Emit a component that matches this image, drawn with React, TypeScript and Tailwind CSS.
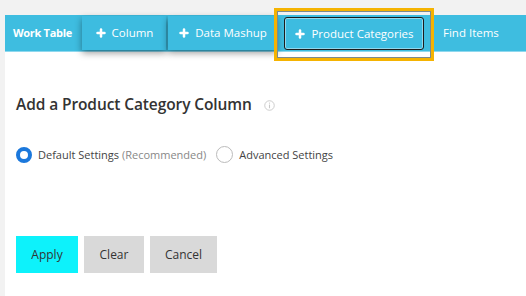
import { Plus } from "lucide-react";

const NavButton = ({ label, w }: { label: string; w: string }) => (
  <button
    className={`flex items-center justify-center gap-[5px] h-[34px] bg-[#3dbce0] text-white text-[11.5px] shadow-[0_3px_7px_rgba(0,0,0,0.4)] ${w}`}
  >
    <Plus className="w-[12px] h-[12px]" strokeWidth={5} />
    {label}
  </button>
);

const App = () => {
  return (
    <div
      className="w-[526px] h-[296px] bg-[#f2f2f2] pt-[15px] pl-[5px] flex flex-col overflow-hidden"
      style={{ fontFamily: '"Open Sans", "Liberation Sans", sans-serif' }}
    >
      <div className="flex-1 bg-white flex flex-col">
        <div className="h-[37px] bg-[#3ebde0] flex items-start border-b border-[#8fd8ee]">
          <div className="w-[77px] h-[36px] flex items-center pl-[8px] text-white text-[11px] font-bold tracking-[-0.3px]">
            Work Table
          </div>
          <div className="pt-[1px]">
            <NavButton label="Column" w="w-[84px]" />
          </div>
          <div className="pt-[1px] ml-[2px]">
            <NavButton label="Data Mashup" w="w-[109px]" />
          </div>
          <div className="relative ml-[7px] mt-[2px]">
            <span className="absolute left-[-10px] top-[-9px] right-[-10px] bottom-[-11px] border-[3px] border-[#f5b301]">
              <span className="absolute inset-0 border border-[#7d8a8f]" />
            </span>
            <button className="relative flex items-center justify-center gap-[5px] w-[140px] h-[33px] bg-[#3dbce0] text-white text-[11.5px] rounded-[3px] border border-[#1c1c1c] shadow-[inset_0_0_0_1px_#8fd8ee]">
              <Plus className="w-[12px] h-[12px]" strokeWidth={5} />
              Product Categories
            </button>
          </div>
          <div className="h-[36px] flex items-center ml-[19px] text-white text-[11.5px]">Find Items</div>
        </div>

        <div className="pl-[11px] pt-[41px]">
          <div className="flex items-center">
            <h2 className="text-[15.5px] font-semibold text-[#333] tracking-[-0.1px]">Add a Product Category Column</h2>
            <svg className="ml-[12px] mt-[1px]" width="11" height="11" viewBox="0 0 12 12">
              <circle cx="6" cy="6" r="5.2" fill="none" stroke="#c8c8c8" strokeWidth="1" />
              <line x1="6" y1="5" x2="6" y2="9" stroke="#c8c8c8" strokeWidth="1.2" />
              <circle cx="6" cy="3.3" r="0.7" fill="#c8c8c8" />
            </svg>
          </div>

          <div className="flex items-center mt-[30px] text-[11px] text-[#444]">
            <span className="w-[16px] h-[16px] rounded-full border-[4px] border-[#1b78dc] bg-white" />
            <span className="ml-[6px]">
              Default Settings <span className="text-[#888]">(Recommended)</span>
            </span>
            <span className="ml-[10px] w-[17px] h-[17px] rounded-full border border-[#bbb] bg-white" />
            <span className="ml-[6px]">Advanced Settings</span>
          </div>

          <div className="flex gap-[6px] mt-[73px]">
            <button className="w-[62px] h-[37px] bg-[#0df2fb] text-[12px] text-[#333]">Apply</button>
            <button className="w-[60px] h-[37px] bg-[#d9d9d9] text-[12px] text-[#333]">Clear</button>
            <button className="w-[67px] h-[37px] bg-[#d9d9d9] text-[12px] text-[#333]">Cancel</button>
          </div>
        </div>
      </div>
    </div>
  );
};

export default App;
